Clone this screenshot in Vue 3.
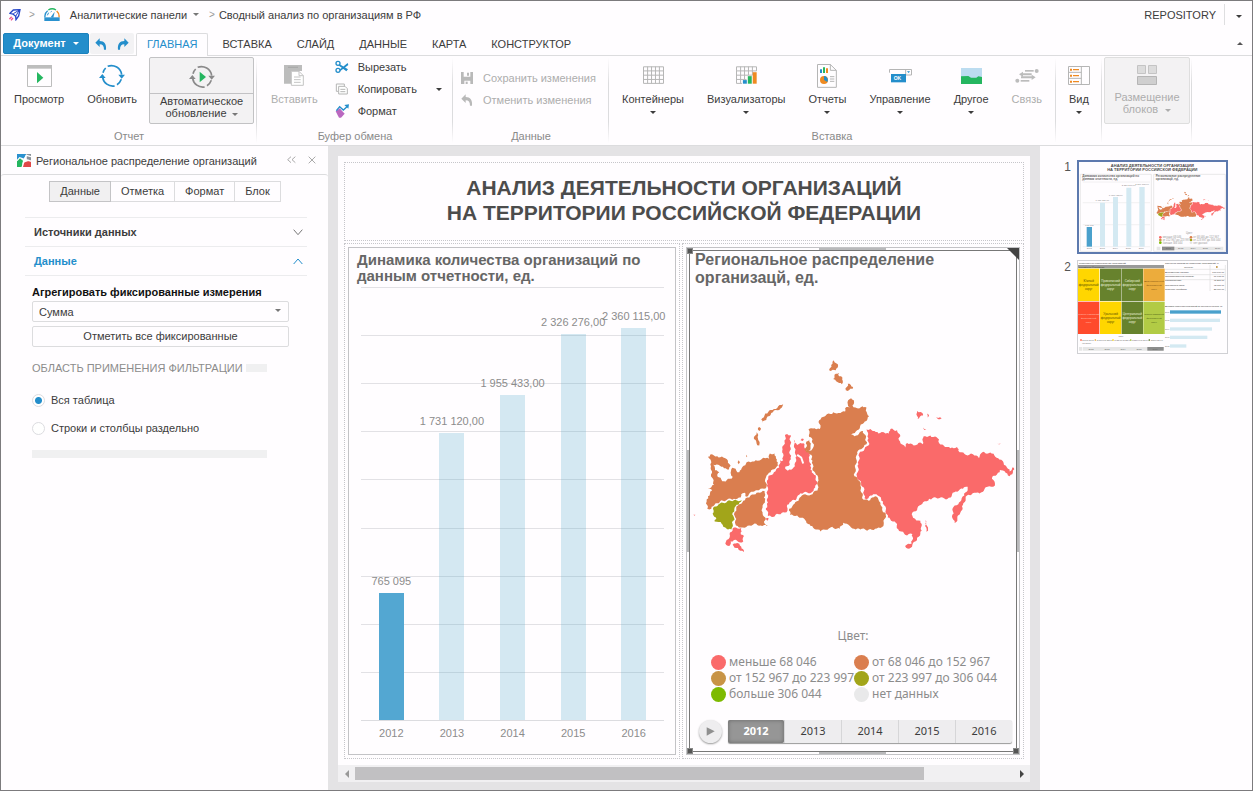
<script setup>
import { ref } from 'vue'

const tabs = ['ГЛАВНАЯ', 'ВСТАВКА', 'СЛАЙД', 'ДАННЫЕ', 'КАРТА', 'КОНСТРУКТОР']
const panelTabs = ['Данные', 'Отметка', 'Формат', 'Блок']
const scope = ref('all')
const aggregation = ref('Сумма')

const axisMax = 2608000
const bars = [
  { year: 2012, value: 765095, label: '765 095' },
  { year: 2013, value: 1731120, label: '1 731 120,00' },
  { year: 2014, value: 1955433, label: '1 955 433,00' },
  { year: 2015, value: 2326276, label: '2 326 276,00' },
  { year: 2016, value: 2360115, label: '2 360 115,00' }
]

const legend = [
  { cls: 'c1', text: 'меньше 68 046' },
  { cls: 'c2', text: 'от 68 046 до 152 967' },
  { cls: 'c3', text: 'от 152 967 до 223 997' },
  { cls: 'c4', text: 'от 223 997 до 306 044' },
  { cls: 'c5', text: 'больше 306 044' },
  { cls: 'c6', text: 'нет данных' }
]

// Adds small deterministic notches between outline points so borders look like coastlines.
function coast(points) {
  const p = points.split(' ').map(s => s.split(',').map(Number))
  const out = []
  p.forEach((a, i) => {
    const b = p[(i + 1) % p.length]
    const dx = b[0] - a[0]
    const dy = b[1] - a[1]
    const len = Math.hypot(dx, dy)
    const n = Math.max(1, Math.round(len / 5))
    for (let k = 0; k < n; k++) {
      const t = k / n
      const h = Math.sin(a[0] * 12.9 + a[1] * 7.3 + k * 5.1) * 2.8
      const j = k ? h : 0
      out.push(`${Math.round(a[0] + dx * t - (dy / len) * j)},${Math.round(a[1] + dy * t + (dx / len) * j)}`)
    }
  })
  return out.join(' ')
}

const orange = '#da7e4f'
const pink = '#fa6a6a'
const olive = '#a2a51a'
const regions = [
  [orange, '72,318 84,310 100,316 118,320 132,330 140,345 135,356 120,352 108,345 88,342 93,358 106,364 100,376 112,386 125,392 138,384 146,378 140,366 142,355 150,352 160,364 172,356 176,348 188,334 200,334 215,328 232,326 244,322 256,324 258,308 272,308 276,322 282,335 278,348 262,358 252,370 246,380 246,412 225,418 208,423 195,430 186,438 182,426 172,430 170,440 150,444 130,446 108,452 92,462 82,474 70,474 68,452 72,436 84,420 72,412 90,402 84,380 80,352 82,335'],
  [olive, '88,470 108,458 140,450 174,448 164,462 152,470 146,486 150,500 146,520 142,536 128,534 116,522 104,514 92,512 96,500 86,488'],
  [orange, '178,450 190,440 215,430 232,424 243,422 240,440 243,455 236,470 236,488 244,500 242,518 252,526 230,524 212,518 196,524 176,530 156,524 154,500 152,484 162,464'],
  [pink, '150,530 172,532 170,546 180,556 178,572 164,574 150,568 140,572 136,586 124,578 134,565 138,545'],
  [pink, '146,582 160,577 172,588 180,604 164,597'],
  [pink, '252,496 250,480 246,472 252,455 250,430 251,400 253,380 270,364 286,350 288,328 298,328 295,300 302,268 306,250 320,252 320,280 318,300 320,320 318,340 304,348 312,360 326,354 332,340 338,316 334,300 330,266 340,282 350,276 362,280 366,296 376,308 376,325 382,340 380,356 388,368 396,380 400,398 394,410 384,424 350,427 338,444 322,452 310,462 308,484 285,490 262,498'],
  [orange, '374,236 392,232 408,234 406,208 426,194 448,184 470,186 484,182 488,168 498,170 491,154 502,142 510,148 506,164 520,172 536,166 548,170 550,188 556,196 540,216 520,238 502,250 512,256 538,240 546,262 548,280 536,292 520,304 516,340 512,376 526,390 532,410 536,444 554,450 574,436 584,446 590,462 596,480 606,488 600,520 590,532 574,534 550,540 534,534 516,536 498,526 478,516 468,534 440,530 410,542 380,526 364,508 340,494 318,492 316,474 328,462 344,450 354,434 386,430 402,414 403,384 394,366 386,352 386,330 382,312 366,304 364,296 376,300 388,290 386,266 376,258'],
  [pink, '548,236 560,234 572,240 584,248 600,244 616,248 620,234 640,238 648,250 646,268 664,290 670,276 690,284 704,276 716,280 720,256 740,254 762,262 766,276 780,284 800,292 820,288 824,300 846,312 868,310 886,322 896,304 924,308 944,322 960,336 970,350 978,362 986,350 992,356 978,376 966,366 944,352 948,364 926,378 934,404 912,408 888,428 872,426 850,434 838,462 830,486 812,522 806,492 810,468 830,452 842,434 856,404 838,414 816,422 792,444 756,440 736,444 712,462 684,490 694,504 710,510 714,540 700,566 676,594 664,586 684,578 686,550 664,552 644,536 636,516 612,500 606,478 598,452 586,436 568,430 554,442 542,442 540,410 520,380 524,340 526,308 554,284 554,262'],
  [orange, '298,160 294,170 262,186 248,202 236,216 232,206 244,188 270,174'],
  [orange, '226,228 231,232 226,240 222,236'],
  [orange, '218,244 222,262 226,284 218,278 210,264'],
  [orange, '450,28 462,40 456,58 438,60 442,42'],
  [orange, '456,68 466,66 466,76 476,80 474,100 462,94 448,84'],
  [orange, '492,98 508,108 506,114 486,118'],
  [orange, '368,272 378,262 380,284 376,300 364,300'],
  [pink, '700,180 716,186 718,194 702,204'],
  [pink, '730,188 736,192 732,200'],
  [pink, '758,198 774,202 764,205'],
  [pink, '718,230 728,234 722,237'],
  [pink, '940,275 952,278 946,281'],
  [pink, '726,508 728,522 733,540 728,543 724,526'],
  [pink, '28,492 34,492 32,495'],
  [orange, '164,328 168,334 164,340 161,334'],
  [orange, '187,312 190,316 187,319'],
  [pink, '247,502 254,502 251,510'],
  [pink, '350,268 360,264 357,270']
].map(([fill, pts]) => ({ fill, points: coast(pts) }))

const tiles = [
  { x: 114, y: 357, f: '#ffd600', t: 'Южный', d: '#5c5200' },
  { x: 180, y: 357, f: '#67822d', t: 'Приволжский', d: '#e8f0d8' },
  { x: 245, y: 357, f: '#67822d', t: 'Сибирский', d: '#e8f0d8' },
  { x: 310, y: 357, f: '#ecac3c', t: 'Дальневосточный', d: '#7a4e10' },
  { x: 114, y: 456, f: '#ff4a2c', t: 'Северо-Кавказский', d: '#ffc8b8' },
  { x: 180, y: 456, f: '#ffd600', t: 'Уральский', d: '#5c5200' },
  { x: 245, y: 456, f: '#67822d', t: 'Центральный', d: '#e8f0d8' },
  { x: 310, y: 456, f: '#b2cb45', t: 'Северо-Западный', d: '#4a5a14' }
]
const tableRows = [
  ['Добывающая отрасль', '100 000,00'],
  ['Обрабатывающая отрасль', '77 045,00'],
  ['Строительство', '48 271,00'],
  ['Транспорт и связь', '43 071,00'],
  ['Сельское хозяйство', '28 070,00']
]
const thumbBars = [[482, 153, '#4aa0cc'], [507, 150, '#d4e9f2'], [533, 126, '#d4e9f2'], [558, 112, '#d4e9f2'], [584, 49, '#d4e9f2']]
</script>

<template>
  <div class="app">
    <header class="crumbs">
      <svg width="12" height="12" viewBox="0 0 36 36"><path d="M3 13 L13 3 L33 2 L29 21 L21 32 L20 22 L12 15 Z" fill="#fffdff" stroke="#2746c8" stroke-width="4"/><path d="M13 14 L31 3 L20 22" fill="none" stroke="#2746c8" stroke-width="3"/><path d="M1 30 L8 23 M6 34 L12 27" stroke="#f0568c" stroke-width="4"/></svg>
      <span class="gt">&gt;</span>
      <svg class="gauge" width="16" height="13" viewBox="0 0 48 39"><path d="M3 28 A21 21 0 0 1 11 8" fill="none" stroke="#2a91cf" stroke-width="4"/><path d="M13 6 A21 21 0 0 1 36 6" fill="none" stroke="#25b660" stroke-width="4"/><path d="M38 9 A21 21 0 0 1 45 28" fill="none" stroke="#ee8a22" stroke-width="4"/><path d="M20 28 L32 11 L28 29 Z" fill="#2a91cf"/><path d="M1 28 H47 V39 H1 Z" fill="#2a91cf"/><path d="M10 22 l4 -8 M20 12 l3 -2" stroke="#2a91cf" stroke-width="3"/></svg>
      <a href="#" class="crumb">Аналитические панели</a><i class="caret"></i>
      <span class="gt gt2">&gt;</span>
      <a href="#" class="crumb">Сводный анализ по организациям в РФ</a>
      <span class="repo">REPOSITORY</span>
      <button class="repo-more" aria-label="Меню репозитория"><i class="caret dark"></i></button>
    </header>

    <div class="tabrow">
      <button class="doc">Документ <i class="caret white"></i></button>
      <div class="history">
        <button aria-label="Отменить"><svg width="12" height="12" viewBox="0 0 36 36"><path d="M14 1 L14 9 C28 9 35 18 33 35 L27 35 C27 24 23 19 14 19 L14 27 L1 14 Z" fill="#248ecb"/></svg></button>
        <button aria-label="Повторить"><svg width="12" height="12" viewBox="0 0 36 36"><path d="M22 1 L22 9 C8 9 1 18 3 35 L9 35 C9 24 13 19 22 19 L22 27 L35 14 Z" fill="#248ecb"/></svg></button>
      </div>
      <nav>
        <button v-for="(t, i) in tabs" :key="t" :class="{ active: i === 0 }">{{ t }}</button>
      </nav>
      <button class="fold" aria-label="Свернуть ленту"><i class="caret dark up"></i></button>
    </div>

    <div class="ribbon">
      <section class="group g-report">
        <div class="items">
          <button class="big"><span class="ico"><svg width="25" height="22" viewBox="0 0 75 66"><path d="M1.500 1.500 H73.500 V64.500 H1.500 Z" fill="#fffdff" stroke="#bdbdbd" stroke-width="3"/><path d="M0 0 H75 V11 H0 Z" fill="#bdbdbd"/><path d="M30 21 L49 38 L30 55 Z" fill="#25b660"/></svg></span>Просмотр</button>
          <button class="big"><span class="ico"><svg width="26" height="24" viewBox="0 0 78 72"><g fill="none" stroke="#248ecb" stroke-width="5"><path d="M26 7 A31 31 0 0 1 68 32"/><path d="M67 46 A31 31 0 0 1 54 62"/><path d="M47 66 A31 31 0 0 1 11 40"/><path d="M12 26 A31 31 0 0 1 20 12"/></g><path d="M58 32 H78 L68 44 Z M0 42 H20 L10 30 Z" fill="#248ecb"/></svg></span>Обновить</button>
          <button class="auto">
            <span class="ico"><svg width="26" height="24" viewBox="0 0 78 72"><g fill="none" stroke="#8a8a8a" stroke-width="5"><path d="M26 7 A31 31 0 0 1 68 32"/><path d="M67 46 A31 31 0 0 1 54 62"/><path d="M47 66 A31 31 0 0 1 11 40"/><path d="M12 26 A31 31 0 0 1 20 12"/></g><path d="M58 32 H78 L68 44 Z M0 42 H20 L10 30 Z" fill="#8a8a8a"/><path d="M32 20 L51 36 L32 52 Z" fill="#25b660"/></svg></span>
            <span class="two">Автоматическое<br>обновление <i class="caret"></i></span>
          </button>
        </div>
        <h2>Отчет</h2>
      </section>

      <section class="group g-clip">
        <div class="items">
          <button class="big" disabled><span class="ico"><svg width="20" height="21" viewBox="0 0 60 63"><path d="M0 0 H54 V18 H24 V56 H0 Z" fill="#bcbcbc"/><path d="M22 19 H45 L58 32 V61 H22 Z M45 19 V32 H58" fill="#fff" stroke="#c4c4c4" stroke-width="3"/><path d="M30 36 H50 M30 44 H50 M30 52 H50" stroke="#c4c4c4" stroke-width="3"/><path d="M12 5 H42 V9 H12 Z" fill="#aaa"/></svg></span>Вставить</button>
          <div class="smalls">
            <button><svg width="14" height="14" viewBox="0 0 42 42"><g fill="none" stroke="#248ecb" stroke-width="4"><circle cx="9" cy="10" r="6"/><circle cx="9" cy="31" r="6"/></g><path d="M13 12 L39 28 L34 34 L12 17 Z M13 29 L38 9 L40 15 L16 33 Z" fill="#248ecb"/></svg>Вырезать</button>
            <button><svg width="14" height="14" viewBox="0 0 42 42"><g fill="#fff" stroke="#b5b5b5" stroke-width="3"><path d="M4 28 V6 H28 V12 M4 28 H10"/><path d="M11 13 H30 L37 20 V36 H11 Z"/><path d="M16 22 H31 M16 29 H31"/></g></svg>Копировать<i class="caret dark far"></i></button>
            <button><svg width="14" height="14" viewBox="0 0 42 42"><path d="M2 22 L14 13 L29 29 L18 41 L12 41 Z" fill="#ba68c0"/><path d="M4 20 L14 8 L25 18 L36 8" fill="none" stroke="#248ecb" stroke-width="4"/><path d="M28 3 L42 1 L40 14 Z" fill="#248ecb"/></svg>Формат</button>
          </div>
        </div>
        <h2>Буфер обмена</h2>
      </section>

      <section class="group g-data">
        <div class="items">
          <div class="smalls mid">
            <button disabled><svg width="12" height="12" viewBox="0 0 36 36"><path d="M0 0 H8 V14 H28 V0 H36 V36 H28 V26 H10 V36 H0 Z" fill="#b9b9b9"/><path d="M18 2 h6 v9 h-6z" fill="#b9b9b9"/><path d="M14 29 h6 v7 h-6z" fill="#b9b9b9"/></svg>Сохранить изменения</button>
            <button disabled><svg width="12" height="12" viewBox="0 0 36 36"><path d="M14 1 L14 9 C28 9 35 18 33 35 L27 35 C27 24 23 19 14 19 L14 27 L1 14 Z" fill="#b9b9b9"/></svg>Отменить изменения</button>
          </div>
        </div>
        <h2>Данные</h2>
      </section>

      <section class="group g-insert">
        <div class="items">
          <button class="big"><span class="ico"><svg width="21" height="19" viewBox="0 0 64 56"><path d="M1.500 1.500 H62.500 V52 H1.500 Z M14 1 V52 M26 1 V52 M38 1 V52 M50 1 V52 M1 14 H62 M1 27 H62 M1 40 H62" fill="none" stroke="#b5b5b5" stroke-width="3"/></svg></span>Контейнеры<i class="caret dark"></i></button>
          <button class="big"><span class="ico"><svg width="21" height="19" viewBox="0 0 64 56"><path d="M1.500 1.500 H62.500 V14 H1.500 Z M1.500 14 V52 H18 M14 1 V52 M26 1 V40 M38 1 V27 M50 1 V27 M1 27 H50 M1 40 H32" fill="none" stroke="#b5b5b5" stroke-width="3"/><path d="M21 42 h12 v11 h-12z" fill="#248ecb"/><path d="M36 30 h12 v23 h-12z" fill="#25b660"/><path d="M51 18 h12 v35 h-12z" fill="#ee8a22"/></svg></span>Визуализаторы<i class="caret dark"></i></button>
          <button class="big"><span class="ico"><svg width="20" height="24" viewBox="0 0 60 72"><path d="M1.500 1.500 H40 L58 19 V70 H1.500 Z M40 1 V19 H58" fill="#fffdff" stroke="#b5b5b5" stroke-width="3"/><path d="M9 16 h6 v11 h-6z" fill="#248ecb"/><path d="M18 10 h6 v17 h-6z" fill="#25b660"/><path d="M27 13 h6 v14 h-6z" fill="#ee8a22"/><circle cx="21" cy="48" r="12" fill="#ee8a22"/><path d="M21 48 V36 A12 12 0 0 1 31 54 Z" fill="#248ecb"/><path d="M39 38 H52 M39 45 H52 M39 52 H52" stroke="#b5b5b5" stroke-width="3"/></svg></span>Отчеты<i class="caret dark"></i></button>
          <button class="big"><span class="ico"><svg width="23" height="15" viewBox="0 0 69 45"><path d="M1.500 14 V4.500 H67.500 V21 H50 V4" fill="none" stroke="#b5b5b5" stroke-width="3"/><path d="M54 10 h9 l-4 5z" fill="#248ecb"/><path d="M6 18 h45 v25 h-45z" fill="#248ecb"/><text x="14" y="36" font-size="15" font-weight="700" fill="#fff">OK</text></svg></span>Управление<i class="caret dark"></i></button>
          <button class="big"><span class="ico"><svg width="21" height="16" viewBox="0 0 63 48"><path d="M0 0 h63 v48 h-63z" fill="#bcdcf0"/><path d="M0 25 L22 24 L30 29 L46 29 L52 25 L63 27 V48 H0 Z" fill="#25b660"/></svg></span>Другое<i class="caret dark"></i></button>
          <button class="big" disabled><span class="ico"><svg width="24" height="14" viewBox="0 0 72 42"><g fill="#bcbcbc"><path d="M12 16 L24 8 V13 H50 V19 H24 V24 Z"/><path d="M62 25 L50 17 V22 H18 V28 H50 V33 Z"/><circle cx="65" cy="6" r="6"/><path d="M30 3 h26 v5 h-26z"/><circle cx="7" cy="35" r="6"/><path d="M17 33 h26 v5 h-26z"/></g></svg></span>Связь</button>
        </div>
        <h2>Вставка</h2>
      </section>

      <section class="group g-view">
        <div class="items">
          <button class="big"><span class="ico"><svg width="22" height="19" viewBox="0 0 66 57"><path d="M1.500 1.500 H64.500 V55.500 H1.500 Z M40 1 V56 M1 19 H40 M1 37 H40" fill="none" stroke="#b5b5b5" stroke-width="3"/><path d="M6 8 h6 v6 h-6z M15 9 h18 v4 h-18z M6 26 h6 v6 h-6z M15 27 h18 v4 h-18z M6 44 h6 v6 h-6z M15 45 h18 v4 h-18z" fill="#ee8a22"/></svg></span>Вид<i class="caret dark"></i></button>
        </div>
      </section>
      <section class="group g-place">
        <div class="items">
          <button class="place" disabled>
            <span class="ico"><svg width="20" height="20" viewBox="0 0 60 60"><path d="M1.500 1.500 h24 v24 h-24z M34.500 1.500 h24 v24 h-24z" fill="#dcdcdc" stroke="#c4c4c4" stroke-width="3"/><path d="M1.500 34.500 h57 v24 h-57z" fill="#cfcfcf" stroke="#b5b5b5" stroke-width="3"/></svg></span>
            <span class="two">Размещение<br>блоков <i class="caret"></i></span>
          </button>
        </div>
      </section>
    </div>

    <main>
      <aside class="side">
        <div class="side-head">
          <svg width="14" height="13" viewBox="0 0 42 39"><path d="M0 0 H28 L20 16 L6 14 L0 20 Z" fill="#2a91cf"/><path d="M28 0 H42 V20 L30 18 Z" fill="#8a9199"/><path d="M0 20 L8 12 L18 20 L14 39 H0 Z" fill="#25b660"/><path d="M14 39 L20 24 L42 20 V39 Z" fill="#e04848"/><path d="M0 20 L8 11 L22 16 L28 4 L42 8 M18 26 L32 18 L42 22 M16 39 L20 24" fill="none" stroke="#fff" stroke-width="4"/></svg>
          <span class="ttl">Региональное распределение организаций</span>
          <button aria-label="Свернуть"><svg width="9" height="8" viewBox="0 0 27 24"><path d="M12 2 L2 11 L12 20 M25 2 L15 11 L25 20" fill="none" stroke="#999" stroke-width="2.500"/></svg></button>
          <button aria-label="Закрыть"><svg width="8" height="8" viewBox="0 0 24 24"><path d="M2 2 L22 22 M22 2 L2 22" fill="none" stroke="#999" stroke-width="2.500"/></svg></button>
        </div>
        <div class="side-body">
          <div class="seg"><button v-for="(t, i) in panelTabs" :key="t" :class="{ on: i === 0 }">{{ t }}</button></div>
          <div class="acc">
            <button>Источники данных<svg width="10" height="7" viewBox="0 0 30 21"><path d="M2 2 L15 17 L28 2" fill="none" stroke="#777" stroke-width="3"/></svg></button>
            <button class="open">Данные<svg width="10" height="7" viewBox="0 0 30 21"><path d="M2 18 L15 3 L28 18" fill="none" stroke="#248ecb" stroke-width="3"/></svg></button>
          </div>
          <div class="form">
            <label for="agg">Агрегировать фиксированные измерения</label>
            <div class="selbox"><select id="agg" v-model="aggregation"><option>Сумма</option></select><i class="caret"></i></div>
            <button class="mark">Отметить все фиксированные</button>
            <div class="sec">ОБЛАСТЬ ПРИМЕНЕНИЯ ФИЛЬТРАЦИИ<i></i></div>
            <label class="rad"><input v-model="scope" type="radio" name="scope" value="all">Вся таблица</label>
            <label class="rad"><input v-model="scope" type="radio" name="scope" value="split">Строки и столбцы раздельно</label>
            <div class="rule"></div>
          </div>
        </div>
      </aside>

      <section class="stage">
        <div class="slide">
          <div class="cell title"><h1>АНАЛИЗ ДЕЯТЕЛЬНОСТИ ОРГАНИЗАЦИЙ<br>НА ТЕРРИТОРИИ РОССИЙСКОЙ ФЕДЕРАЦИИ</h1></div>
          <div class="cells">
            <div class="cell left">
              <div class="block">
                <h3>Динамика количества организаций по данным отчетности, ед.</h3>
                <div class="chart">
                  <div class="lines"><i v-for="n in 9" :key="n"></i></div>
                  <div class="bars">
                    <div v-for="b in bars" :key="b.year" class="col">
                      <span>{{ b.label }}</span>
                      <div class="bar" :class="{ strong: b.year === 2012 }" :style="{ height: (b.value / axisMax) * 100 + '%' }"></div>
                    </div>
                  </div>
                </div>
                <div class="years"><span v-for="b in bars" :key="b.year">{{ b.year }}</span></div>
              </div>
            </div>
            <div class="cell right">
              <div class="block picked">
                <i class="grip gt-top"></i><i class="grip gt-bottom"></i><i class="grip gt-left"></i><i class="grip gt-right"></i>
                <i class="knob k1"></i><i class="knob k2"></i><i class="knob k3"></i><i class="knob k4"></i><i class="corner"></i>
                <div class="frame">
                  <h3>Региональное распределение<br>организацй, ед.</h3>
                  <div class="map"><svg viewBox="18 0 979 630"><polygon v-for="(r, i) in regions" :key="i" :points="r.points" :fill="r.fill"/><path d="M340 312 L352 320 L358 338" fill="none" stroke="#fffdff" stroke-width="6"/></svg></div>
                  <div class="lg-title">Цвет:</div>
                  <div class="legend"><span v-for="l in legend" :key="l.cls"><i :class="l.cls"></i>{{ l.text }}</span></div>
                  <div class="time">
                    <button class="play" aria-label="Воспроизвести"><svg width="9" height="9" viewBox="0 0 27 27"><path d="M2 1 L26 13 L2 26 Z" fill="#8f8f8f"/></svg></button>
                    <div class="steps"><button v-for="b in bars" :key="b.year" :class="{ on: b.year === 2012 }">{{ b.year }}</button></div>
                  </div>
                </div>
              </div>
            </div>
          </div>
        </div>
        <div class="scroll">
          <i class="arr l"></i><div class="track"><div class="thumb"></div></div><i class="arr r"></i>
        </div>
      </section>

      <aside class="slides">
        <div class="srow"><span>1</span>
          <button class="th sel" aria-label="Слайд 1">
            <svg viewBox="117 36 441 270">
              <g font-weight="700" fill="#4a4a4a" font-size="12" text-anchor="middle"><text x="337" y="50">АНАЛИЗ ДЕЯТЕЛЬНОСТИ ОРГАНИЗАЦИЙ</text><text x="337" y="62">НА ТЕРРИТОРИИ РОССИЙСКОЙ ФЕДЕРАЦИИ</text></g>
              <path d="M121 73 H334 V304 H121 Z M341 73 H556 V304 H341 Z" fill="none" stroke="#dedede" stroke-width="2"/>
              <g font-weight="700" fill="#666" font-size="9"><text x="127" y="82">Динамика количества организаций по</text><text x="127" y="91">данным отчетности, ед.</text><text x="347" y="82">Региональное распределение</text><text x="347" y="91">организацй, ед.</text></g>
              <path d="M128 96 H330 M128 158 H330 M128 224 H330 M128 290 H330" stroke="#ececec" stroke-width="2"/>
              <path d="M140 231 h16 v59 h-16z" fill="#4aa0cc"/>
              <path d="M180 158 h15 v132 h-15z M219 141 h15 v149 h-15z M259 113 h15 v177 h-15z M298 111 h16 v179 h-16z" fill="#d4e9f2"/>
              <g font-size="7" fill="#888" text-anchor="middle"><text x="148" y="228">765 095</text><text x="187" y="154">1 731 120,00</text><text x="227" y="137">1 955 433,00</text><text x="266" y="108">2 326 276,00</text><text x="306" y="106">2 360 115,00</text><text v-for="(b, i) in bars" :key="b.year" :x="148 + i * 39" y="298">{{ b.year }}</text></g>
              <g transform="translate(335 121) scale(.222 .148)"><polygon v-for="(r, i) in regions" :key="i" :points="r.points" :fill="r.fill"/></g>
              <g font-size="8" fill="#999"><text x="438" y="253">Цвет:</text><text x="368" y="265">меньше 68 046</text><text x="460" y="265">от 68 046 до 152 967</text><text x="368" y="273">от 152 967 до 223 997</text><text x="460" y="273">от 223 997 до 306 044</text><text x="368" y="281">больше 306 044</text><text x="460" y="281">нет данных</text></g>
              <g><circle cx="361" cy="262" r="4" fill="#fa6a6a"/><circle cx="361" cy="270" r="4" fill="#c89446"/><circle cx="361" cy="278" r="4" fill="#7dba00"/><circle cx="453" cy="262" r="4" fill="#da7e4f"/><circle cx="453" cy="270" r="4" fill="#a2a51a"/><circle cx="453" cy="278" r="4" fill="#e6e6e6"/></g>
              <path d="M366 290 h184 v11 h-184z M350 290 h11 v11 h-11z" fill="#e6e6e6"/><path d="M366 290 h37 v11 h-37z" fill="#8c8c8c"/>
              <g font-size="7" fill="#666" text-anchor="middle"><text v-for="(b, i) in bars" :key="b.year" :x="385 + i * 37" y="298">{{ b.year }}</text></g>
            </svg>
          </button>
        </div>
        <div class="srow"><span>2</span>
          <button class="th" aria-label="Слайд 2">
            <svg viewBox="114 334 447 276">
              <g font-size="7" fill="#333"><text x="117" y="342">Региональное распределение организаций</text><text x="375" y="342">Структура отрасли по количеству организаций, %</text></g>
              <path d="M114 346 h258 v10 h-258z" fill="#9a9a9a"/><text x="117" y="354" font-size="7" fill="#333">Российская Федерация</text>
              <g v-for="t in tiles" :key="t.t"><rect :x="t.x" :y="t.y" width="64" height="97" :fill="t.f"/>
                <g :fill="t.d" :font-size="t.t.length > 12 ? 7 : 9" text-anchor="middle"><text :x="t.x + 32" :y="t.y + 40">{{ t.t }}</text><text :x="t.x + 32" :y="t.y + 52">федеральный</text><text :x="t.x + 32" :y="t.y + 63">округ</text></g></g>
              <text x="243" y="562" font-size="6" fill="#666" text-anchor="middle">Цвет:</text>
              <g font-size="5" fill="#555"><text x="127" y="573">меньше 68 046</text><text x="170" y="573">от 68 046 до 152 967</text><text x="223" y="573">от 152 967 до 223 997</text><text x="276" y="573">от 223 997 до 306 044</text><text x="332" y="573">больше 306 044</text><text x="127" y="582">нет данных</text></g>
              <path d="M121 569h4v4h-4z" fill="#ff4a2c"/><path d="M164 569h4v4h-4z" fill="#ecac3c"/><path d="M217 569h4v4h-4z" fill="#ffd600"/><path d="M270 569h4v4h-4z" fill="#b2cb45"/><path d="M326 569h4v4h-4z" fill="#67822d"/>
              <path d="M128 592 h243 v11 h-243z M117 592 h9 v11 h-9z" fill="#e6e6e6"/><path d="M322 592 h49 v11 h-49z" fill="#8c8c8c"/>
              <g font-size="7" fill="#666" text-anchor="middle"><text v-for="(b, i) in bars" :key="b.year" :x="153 + i * 48" y="600">{{ b.year }}</text></g>
              <path d="M375 359 H556 M375 375 H556 M375 390 H556 M510 346 V424 M556 346 V424" stroke="#ddd" stroke-width="2"/>
              <text x="432" y="354" font-size="7" fill="#555">Отрасль</text><path d="M528 349h5v6h-5z" fill="#c9a25a"/>
              <g font-size="7" fill="#333"><g v-for="(r, i) in tableRows" :key="i"><text x="375" :y="369 + i * 13">{{ r[0] }}</text><text x="552" :y="369 + i * 13" text-anchor="end">{{ r[1] }}</text></g></g>
              <text x="375" y="471" font-size="6" fill="#333">Динамика количества организаций по данным отчетности, ед.</text>
              <g v-for="(b, i) in thumbBars" :key="i"><rect x="390" :y="b[0]" :width="b[1]" height="10" :fill="b[2]"/><text x="375" :y="b[0] + 7" font-size="6" fill="#777">{{ 2016 - i }}</text></g>
            </svg>
          </button>
        </div>
      </aside>
    </main>
  </div>
</template>

<style>
html, body { margin: 0; height: 100%; }
#app { height: 100%; }
</style>

<style scoped>
* { box-sizing: border-box; }
.app { height: 100vh; min-height: 600px; display: flex; flex-direction: column; border: 1px solid #7c7b7d; background: #fffdff; color: #3c3c3c; font: 11px/14px "Liberation Sans", Arial, sans-serif; }
button { font: inherit; color: inherit; background: none; border: 0; padding: 0; margin: 0; white-space: nowrap; }
svg { display: block; flex: none; }
a { color: inherit; text-decoration: none; }
h1, h2, h3 { margin: 0; }
.caret { display: inline-block; width: 0; height: 0; border: 3px solid transparent; border-top-color: #777; border-bottom: 0; vertical-align: 1px; }
.caret.dark { border-top-color: #3c3c3c; }
.caret.white { border-top-color: #fff; }
.caret.up { border-top: 0; border-bottom: 3px solid #555; }

.crumbs { display: flex; align-items: center; height: 29px; padding: 0 0 2px 8px; flex: none; }
.gt { color: #999; font-size: 10px; margin: 0 9px 0 8px; }
.gauge { margin-right: 10px; }
.crumb + .caret { margin-left: 6px; }
.gt2 { margin: 0 4px 0 10px; }
.repo { margin-left: auto; padding-right: 8px; }
.repo-more { width: 28px; height: 21px; border-left: 1px solid #dedee0; }

.tabrow { display: flex; height: 26px; padding: 3px 0 0 2px; border-bottom: 1px solid #dcdcde; flex: none; }
.doc { width: 86px; height: 21px; background: #248ecb; color: #fff; font-weight: 700; border-radius: 2px; border: 1px solid #1c82bd; padding-bottom: 2px; }
.doc .caret { margin-left: 4px; vertical-align: 2px; }
.history { display: flex; justify-content: space-between; align-items: center; width: 44px; height: 21px; margin: 0 2px 0 1px; padding: 0 5px; background: #f3f2f4; border-radius: 2px; }
nav { display: flex; gap: 3px; }
nav button { height: 23px; padding: 0 10px 2px; border: 1px solid transparent; border-bottom: 0; }
nav .active { color: #248ecb; background: #fffdff; border-color: #dcdcde; border-radius: 2px 2px 0 0; }
.fold { margin-left: auto; width: 24px; height: 18px; }

.ribbon { display: flex; height: 90px; flex: none; border-bottom: 1px solid #dcdcde; }
.group { position: relative; display: flex; flex-direction: column; justify-content: space-between; padding: 1px 0; flex: none; }
.group::after { content: ""; position: absolute; right: 0; top: 2px; bottom: 2px; width: 1px; background: linear-gradient(#fffdff, #dcdcde 30%, #dcdcde 75%, #fffdff); }
.group h2 { font-size: 11px; font-weight: 400; line-height: 16px; color: #8a8a8a; text-align: center; }
.items { display: flex; align-items: flex-start; }
.big { display: flex; flex-direction: column; align-items: center; padding-top: 2px; }
.big .caret { margin-top: 5px; }
.ico { display: flex; align-items: center; justify-content: center; height: 33px; }
button:disabled { color: #adadad; }
.g-report { width: 256px; }
.g-report .items { gap: 23px; padding-left: 13px; }
.auto, .place { display: flex; flex-direction: column; background: #f3f2f3; border: 1px solid #c2c2c4; border-radius: 2px; height: 67px; line-height: 12px; }
.auto { width: 105px; margin-left: -11px; }
.auto .ico { height: 36px; border-bottom: 1px solid #c2c2c4; padding-top: 2px; }
.auto .two { padding-top: 1px; }
.two .caret { margin-left: 2px; }
.auto .ico, .place .ico, .two { width: 100%; }
.g-clip { width: 196px; }
.g-clip .items { gap: 17px; padding-left: 14px; }
.smalls { display: flex; flex-direction: column; gap: 4px; padding-top: 1px; }
.smalls button { display: flex; align-items: center; gap: 9px; height: 18px; }
.smalls .far { margin-left: 10px; }
.smalls.mid { padding-top: 12px; }
.smalls.mid button { gap: 10px; }
.g-data { width: 156px; }
.g-data .items { padding-left: 8px; }
.g-insert { padding: 1px 14px 1px 13px; }
.g-insert .items { gap: 23px; }
.g-view { padding: 1px 12px 1px 12px; }
.g-place { padding: 1px 2px; }
.place { width: 86px; border-color: #dedede; }
.place .two .caret { border-top-color: #adadad; margin-left: 4px; }

main { flex: 1; min-height: 0; display: flex; }
.side { width: 327px; flex: none; }
.side-head { display: flex; align-items: center; height: 28px; padding: 0 12px 0 16px; gap: 12px; }
.side-head .ttl { flex: 1; margin-left: -7px; padding-top: 2px; }
.side-body { border: 1px solid #dcdcde; border-left: 0; border-right: 0; border-bottom: 0; border-radius: 3px; padding-top: 6px; }
.seg { display: flex; justify-content: center; }
.seg button { height: 21px; padding: 0 10px 2px; border: 1px solid #dcdcde; margin-right: -1px; background: #fffdff; }
.seg .on { background: #f1f0f1; border-color: #c4c4c6; position: relative; }
.acc { margin: 15px 21px 0 24px; border-top: 1px solid #ececee; }
.acc button { display: flex; width: 100%; height: 29px; align-items: center; justify-content: space-between; padding: 0 4px 0 9px; font-weight: 700; border-bottom: 1px solid #ececee; }
.acc .open { color: #248ecb; }
.form { width: 288px; padding-left: 31px; margin-top: 8px; display: flex; flex-direction: column; }
.form label[for] { font-weight: 700; color: #111; line-height: 16px; margin-bottom: 1px; }
.selbox { position: relative; margin-bottom: 4px; }
.selbox select { appearance: none; width: 100%; height: 21px; border: 1px solid #dcdcde; border-radius: 2px; background: #fffdff; font: inherit; color: inherit; padding: 0 6px; display: block; }
.selbox .caret { position: absolute; right: 8px; top: 8px; }
.mark { height: 21px; border: 1px solid #dcdcde; border-radius: 2px; padding-bottom: 2px; }
.sec { display: flex; align-items: center; gap: 3px; margin: 14px 0 11px; color: #8c8c8c; white-space: nowrap; }
.sec i { width: 21px; height: 8px; background: #f0f0f1; }
.rad { display: flex; align-items: center; gap: 6px; height: 28px; }
.rad input { appearance: none; width: 13px; height: 13px; margin: 0; border: 1px solid #dcdce0; border-radius: 50%; background: #fff; }
.rad input:checked { background: radial-gradient(circle, #248ecb 0 3px, #fff 4px); }
.rule { width: 235px; height: 8px; margin-top: 8px; background: #f0f0f1; }

.stage { flex: 1; min-width: 0; display: flex; flex-direction: column; background: #e4e3e5; padding: 10px 10px 8px; }
.slide { flex: 1; min-height: 0; display: flex; flex-direction: column; gap: 2px; background: #fffdff; padding: 6px; }
.cell { border: 1px dotted #c6c6ca; padding: 3px; min-width: 0; }
.title { height: 79px; display: flex; align-items: center; justify-content: center; padding-bottom: 6px; }
h1 { font-size: 21px; line-height: 25px; color: #4c4c4c; text-align: center; white-space: nowrap; }
.cells { flex: 1; min-height: 0; display: flex; gap: 2px; }
.left { flex: 336; }
.right { flex: 342; }
.block { height: 100%; border: 1px solid #c3c3c6; display: flex; flex-direction: column; position: relative; }
h3 { color: #666; }
.left h3 { font-size: 15px; line-height: 16px; padding: 4px 8px 3px; }
.chart { flex: 1; position: relative; margin: 0 11px 0 12px; border-bottom: 1px solid #dcdce0; }
.lines { position: absolute; inset: 0; display: flex; flex-direction: column; }
.lines i { flex: 1; border-top: 1px solid #e2e1e5; }
.bars { position: relative; height: 100%; display: flex; }
.col { flex: 1; min-width: 0; display: flex; flex-direction: column; justify-content: flex-end; align-items: center; color: #8c8c8c; }
.col span { white-space: nowrap; margin-bottom: 5px; }
.bar { width: 25px; flex: none; background: rgba(84, 173, 202, .25); }
.bar.strong { background: #53a7d2; }
.years { display: flex; margin: 4px 11px 13px 12px; color: #8c8c8c; text-align: center; line-height: 16px; }
.years span { flex: 1; }

.picked { padding: 2px; }
.frame { flex: 1; min-height: 0; border: 1px solid #777; display: flex; flex-direction: column; font-family: "Noto Sans", sans-serif; }
.frame h3 { font: 700 16px/18px "Liberation Sans", Arial, sans-serif; padding: 0 5px; }
.map { flex: 1; min-height: 0; display: flex; align-items: center; padding-bottom: 4px; }
.map svg { width: 100%; max-height: 100%; flex: 1; }
.lg-title { font-size: 12px; line-height: 16px; text-align: center; color: #8c8c8c; }
.legend { display: grid; grid-template-columns: 143px 1fr; grid-auto-rows: 16px; padding: 10px 0 18px 21px; font-size: 12px; line-height: 16px; color: #8c8c8c; white-space: nowrap; }
.legend span { display: flex; align-items: center; gap: 3px; }
.legend i { width: 15px; height: 15px; border-radius: 50%; flex: none; }
.c1 { background: #fa6a6a; } .c2 { background: #da7e4f; } .c3 { background: #c89446; }
.c4 { background: #a2a51a; } .c5 { background: #7dba00; } .c6 { background: #e9e9ea; }
.time { display: flex; align-items: center; gap: 6px; padding: 0 4px 8px 9px; }
.play { width: 23px; height: 23px; border-radius: 50%; background: #eeedef; box-shadow: 0 1px 2px #999; display: flex; align-items: center; justify-content: center; flex: none; }
.steps { flex: 1; display: flex; height: 23px; background: #eeedef; border-radius: 2px; box-shadow: 0 1px 1px #999; }
.steps button { flex: 1; border-left: 1px solid #d6d6d8; font-size: 11px; padding-bottom: 2px; }
.steps .on { color: #fff; font-weight: 700; border: 0; border-radius: 2px; background: #969696; box-shadow: inset 0 0 4px #666; }
.grip { position: absolute; background: #b9b9bb; }
.gt-top, .gt-bottom { width: 67px; height: 2px; left: calc(50% - 34px); }
.gt-left, .gt-right { width: 2px; height: 20%; top: 40%; }
.gt-top { top: 0; } .gt-bottom { bottom: 0; } .gt-left { left: 0; } .gt-right { right: 0; }
.knob { position: absolute; width: 6px; height: 6px; background: #555; border: 1px solid #888; }
.k1 { left: 0; top: 0; } .k2 { right: 0; top: 0; } .k3 { left: 0; bottom: 0; } .k4 { right: 0; bottom: 0; }
.corner { position: absolute; top: 0; right: 0; border: 6px solid #444; border-left-color: transparent; border-bottom-color: transparent; }

.scroll { display: flex; align-items: center; height: 17px; background: #f1f0f2; flex: none; }
.arr { border: 4px solid transparent; }
.arr.l { border-right-color: #999; border-left-width: 2px; margin: 0 6px 0 5px; }
.arr.r { border-left-color: #444; border-right-width: 2px; margin: 0 4px 0 0; }
.track { flex: 1; }
.thumb { width: 85.5%; height: 13px; background: #c1c0c2; }

.slides { width: 212px; flex: none; padding: 14px 24px 0 0; display: flex; flex-direction: column; gap: 6px; }
.srow { display: flex; justify-content: flex-end; gap: 6px; font-size: 12px; color: #555; }
.th { width: 151px; border: 1px solid #d0d0d4; padding: 0; }
.th.sel { border: 2px solid #5d79ae; }
.th svg { width: 100%; height: auto; }
</style>
